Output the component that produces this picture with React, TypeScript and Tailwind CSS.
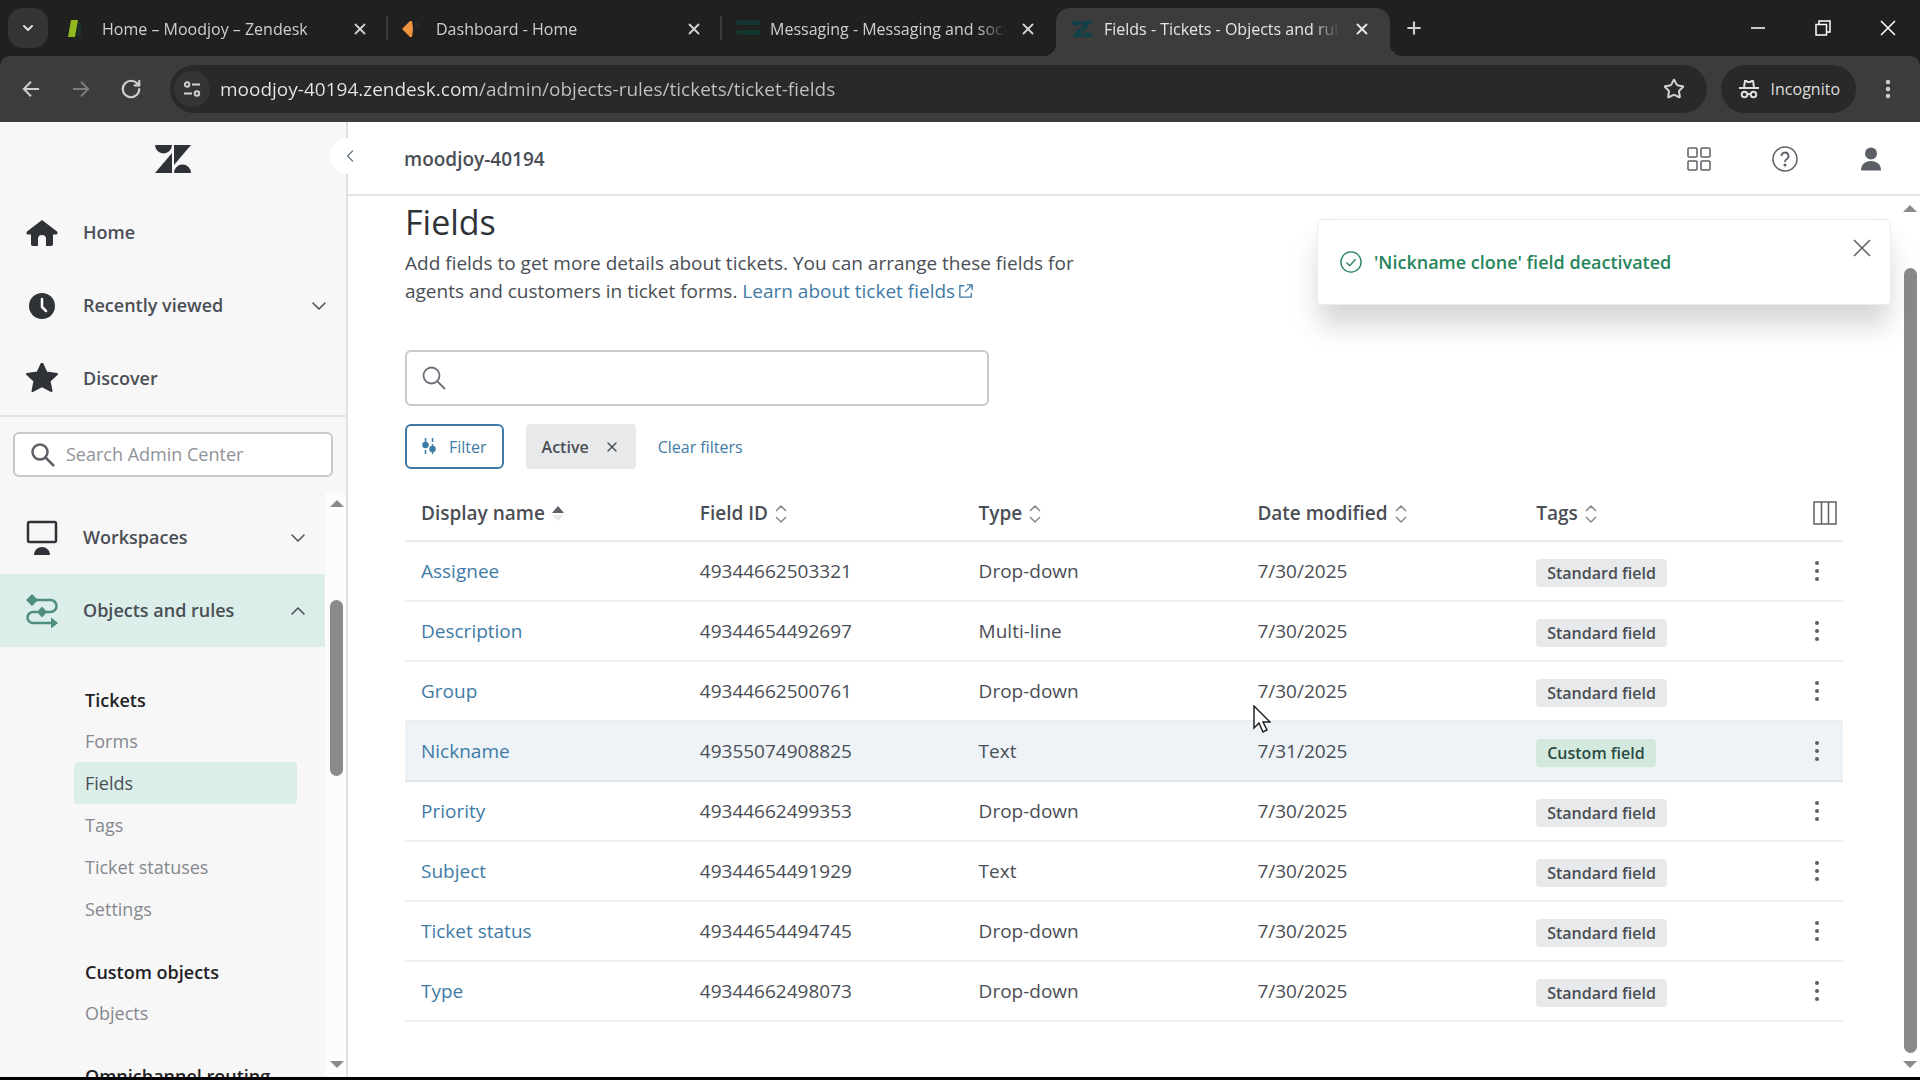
import { useState } from "react";
import type { ReactNode } from "react";
import { ChevronDown, ChevronLeft, ChevronUp, MoreVertical, Plus, RotateCw, Star, X } from "lucide-react";

const TABS = [
  { title: "Home – Moodjoy – Zendesk",               icon: "leaf" },
  { title: "Dashboard - Home",                       icon: "diamond" },
  { title: "Messaging - Messaging and social",       icon: "bars" },
  { title: "Fields - Tickets - Objects and rules",   icon: "zendesk" },
] as const;

const TICKET_LINKS = ["Forms", "Fields", "Tags", "Ticket statuses", "Settings"];

const COLUMNS = ["Display name", "Field ID", "Type", "Date modified", "Tags"];

const FIELDS = [
  { name: "Assignee",      id: "49344662503321", type: "Drop-down",  date: "7/30/2025", custom: false },
  { name: "Description",   id: "49344654492697", type: "Multi-line", date: "7/30/2025", custom: false },
  { name: "Group",         id: "49344662500761", type: "Drop-down",  date: "7/30/2025", custom: false },
  { name: "Nickname",      id: "49355074908825", type: "Text",       date: "7/31/2025", custom: true },
  { name: "Priority",      id: "49344662499353", type: "Drop-down",  date: "7/30/2025", custom: false },
  { name: "Subject",       id: "49344654491929", type: "Text",       date: "7/30/2025", custom: false },
  { name: "Ticket status", id: "49344654494745", type: "Drop-down",  date: "7/30/2025", custom: false },
  { name: "Type",          id: "49344662498073", type: "Drop-down",  date: "7/30/2025", custom: false },
];

function ZendeskMark({ className }: { className: string }) {
  return (
    <svg viewBox="0 0 36 28" className={className} fill="currentColor" aria-hidden="true">
      <path d="M0 0h17a8.500 8.500 0 0 1-17 0z" />
      <path d="M17 8v20H0z" />
      <path d="M19 0h17L19 20z" />
      <path d="M19 28a8.500 8.500 0 0 1 17 0z" />
    </svg>
  );
}

function Favicon({ kind }: { kind: string }) {
  if (kind === "leaf") {
    return <svg viewBox="0 0 24 24" className="size-6 shrink-0 overflow-visible"><path d="M10 5h4l-1 14H9z" fill="#1b2f2b" /><path d="M3 3h7l-3 17H0z" fill="#8fb91d" /></svg>;
  }
  if (kind === "diamond") {
    return <svg viewBox="0 0 24 24" className="size-6 shrink-0 overflow-visible"><path d="M13 4l5 3-4 3z" fill="#1b2f2b" /><path d="M0 12l8-8h2l1 8-1 8H8z" fill="#f0953f" /></svg>;
  }
  if (kind === "bars") {
    return <svg viewBox="0 0 24 24" className="size-6 shrink-0"><path d="M0 3h24v5H0zM1 13h23v5H1z" fill="#14352f" /></svg>;
  }
  return <ZendeskMark className="mx-px h-4 w-[22px] shrink-0 text-[#0e4248]" />;
}

function BrowserTabs() {
  return (
    <div className="flex h-14 items-start bg-[#202020] pt-2">
      <button aria-label="Search tabs" className="ml-2 grid h-10 w-10 shrink-0 place-items-center rounded-[14px] bg-[#343434] text-[#dedede]">
        <ChevronDown className="size-4" strokeWidth={3} />
      </button>
      <div className="ml-1.5 flex h-12">
        {TABS.map((tab, i) => {
          const isActive = i === TABS.length - 1;
          return (
            <div
              key={tab.title}
              className={["relative flex h-12 w-[334px] items-center pb-1.5 pl-3.5 pr-3", isActive ? "rounded-t-[14px] bg-[#3c3c3c] text-[#e6e6e6]" : "text-[#cfcfcf]"].join(" ")}
            >
              {isActive && (
                <>
                  <span className="absolute bottom-0 -left-3 size-3 bg-[radial-gradient(circle_at_0_0,#202020_12px,#3c3c3c_12px)]" />
                  <span className="absolute bottom-0 -right-3 size-3 bg-[radial-gradient(circle_at_100%_0,#202020_12px,#3c3c3c_12px)]" />
                </>
              )}
              <Favicon kind={tab.icon} />
              <a href="#" className="ml-2.5 mr-1.5 flex-1 overflow-hidden whitespace-nowrap text-[16px] [mask-image:linear-gradient(90deg,#000_88%,transparent)]">{tab.title}</a>
              <button aria-label="Close tab" className="grid size-8 shrink-0 place-items-center">
                <X className="size-[18px]" strokeWidth={2.5} />
              </button>
              {i < 2 && <span className="absolute right-0 top-2 h-6 w-0.5 bg-[#3c3c3c]" />}
            </div>
          );
        })}
      </div>
      <button aria-label="New tab" className="ml-1 grid size-10 place-items-center text-[#d0d0d0]">
        <Plus className="size-5" strokeWidth={2.5} />
      </button>
      <div className="ml-auto flex h-10 text-white">
        <button aria-label="Minimize" className="grid w-[65px] place-items-center"><svg viewBox="0 0 16 16" className="size-4"><path d="M1 8h14" stroke="currentColor" strokeWidth="1.500" /></svg></button>
        <button aria-label="Restore" className="grid w-[65px] place-items-center"><svg viewBox="0 0 16 16" className="size-4" fill="none" stroke="currentColor" strokeWidth="1.500"><path d="M1 4.500h10.500V15H1zM4 4.500V1h11v11h-3.500" /></svg></button>
        <button aria-label="Close" className="grid w-[65px] place-items-center"><svg viewBox="0 0 16 16" className="size-4"><path d="M1 1l14 14M15 1L1 15" stroke="currentColor" strokeWidth="1.500" /></svg></button>
      </div>
    </div>
  );
}

function BrowserToolbar() {
  return (
    <div className="bg-[#202020]">
      <div className="flex h-[66px] items-center rounded-t-[10px] bg-[#3c3c3c] text-[#d0d0d0]">
        <button aria-label="Back" className="ml-1.5 grid w-[50px] place-items-center"><svg viewBox="0 0 20 20" className="size-[18px]" fill="none" stroke="currentColor" strokeWidth="2.200"><path d="M19 10H2.500M10 2L2 10l8 8" /></svg></button>
        <button aria-label="Forward" className="grid w-[50px] place-items-center text-[#7c7c7c]"><svg viewBox="0 0 20 20" className="size-[18px]" fill="none" stroke="currentColor" strokeWidth="2.200"><path d="M1 10h16.500M10 2l8 8-8 8" /></svg></button>
        <button aria-label="Reload" className="grid w-[50px] place-items-center"><RotateCw className="size-[22px]" strokeWidth={2.4} /></button>
        <div className="ml-3.5 flex h-12 flex-1 items-center rounded-full bg-[#292929] pl-1">
          <button aria-label="View site information" className="grid size-9 shrink-0 place-items-center rounded-full bg-[#343434]">
            <svg viewBox="0 0 20 20" className="size-[18px]" fill="none" stroke="currentColor" strokeWidth="2.200"><circle cx="4.500" cy="5" r="2.500" /><path d="M10 5h9M1 15h9" /><circle cx="15.500" cy="15" r="2.500" /></svg>
          </button>
          <input
            aria-label="Address"
            defaultValue="moodjoy-40194.zendesk.com/admin/objects-rules/tickets/ticket-fields"
            className="ml-2.5 h-10 flex-1 bg-[linear-gradient(90deg,#e8e8e8_257px,#c2c2c2_257px)] bg-clip-text text-[19px] text-transparent outline-none"
          />
          <button aria-label="Bookmark this tab" className="mr-[22px]"><Star className="size-[22px]" strokeWidth={2.2} /></button>
        </div>
        <div className="ml-3.5 flex h-12 items-center gap-3 rounded-full bg-[#292929] pl-[18px] pr-4 text-[16px] text-[#dedede]">
          <svg viewBox="0 0 20 20" className="size-5" fill="none" stroke="currentColor" strokeWidth="2"><path d="M5 8l1-6h1.500l1 1h3l1-1H14l1 6M0 9h20" /><circle cx="5.500" cy="15.500" r="2.800" /><circle cx="14.500" cy="15.500" r="2.800" /><path d="M8.500 15h3" /></svg>
          Incognito
        </div>
        <button aria-label="Browser menu" className="mx-5"><MoreVertical className="size-6" strokeWidth={2.5} /></button>
      </div>
    </div>
  );
}

function ScrollRail({ children, className }: { children: ReactNode; className: string }) {
  return (
    <div className={["flex shrink-0 flex-col items-center", className].join(" ")} aria-hidden="true">
      <span className="border-x-[7px] border-b-[7px] border-x-transparent border-b-[#8a8a8a]" />
      {children}
      <span className="mt-auto border-x-[7px] border-t-[7px] border-x-transparent border-t-[#8a8a8a]" />
    </div>
  );
}

function NavButton({ icon, label, children, className = "" }: { icon: ReactNode; label: string; children?: ReactNode; className?: string }) {
  return (
    <button className={["flex h-[73px] w-full shrink-0 items-center pl-[26px] text-left text-[18px] font-semibold text-[#4a4e55]", className].join(" ")}>
      <span className="mr-[25px] grid size-8 place-items-center text-[#2f3237]">{icon}</span>
      <span className="flex-1">{label}</span>
      {children}
    </button>
  );
}

function Sidebar() {
  return (
    <aside className="relative flex w-[348px] shrink-0 flex-col border-r-2 border-[#dfe0e2] bg-[#f7f7f8]">
      <div className="flex h-[74px] items-center justify-center"><ZendeskMark className="h-7 w-9 text-[#2f3237]" /></div>
      <button aria-label="Collapse sidebar" className="absolute -right-5 top-4 grid size-9 place-items-center rounded-full bg-white pl-1 text-[#68737d]">
        <ChevronLeft className="size-5" strokeWidth={1.5} />
      </button>
      <nav className="border-b-2 border-[#e3e4e6]">
        <NavButton label="Home" icon={<svg viewBox="0 0 32 28" className="w-8" fill="currentColor"><path d="M16 1L1 12.500c-1 1-.5 3 1 3h3V25c0 1 .5 2 2 2h5v-7a4 4 0 0 1 8 0v7h5c1.500 0 2-1 2-2v-9.500h3c1.500 0 2-2 1-3z" /></svg>} />
        <NavButton label="Recently viewed" icon={<svg viewBox="0 0 26 26" className="w-[26px]"><circle cx="13" cy="13" r="13" fill="currentColor" /><path d="M13 6v8l4 4" fill="none" stroke="#fff" strokeWidth="2.500" strokeLinecap="round" /></svg>}>
          <ChevronDown className="mr-[15px] size-6" strokeWidth={1.5} />
        </NavButton>
        <NavButton label="Discover" icon={<svg viewBox="0 0 32 32" className="w-8" fill="currentColor" stroke="currentColor" strokeWidth="2" strokeLinejoin="round"><path d="M16 0l4.400 9.500L31 11l-7.500 7L25.500 28 16 23l-9.500 5 2-10L1 11l10.600-1.500z" /></svg>} />
      </nav>
      <div className="px-[13px] pb-4 pt-[15px]">
        <label className="flex h-[45px] items-center gap-[11px] rounded-md border-2 border-[#c8c9cc] bg-white pl-4">
          <svg viewBox="0 0 24 24" className="size-6 shrink-0" fill="none" stroke="#5c6066" strokeWidth="2.500"><circle cx="9" cy="9" r="7.500" /><path d="M14.500 14.500L23 23" /></svg>
          <input aria-label="Search Admin Center" placeholder="Search Admin Center" className="w-full min-w-0 text-[18px] outline-none placeholder:text-[#8f9399]" />
        </label>
      </div>
      <div className="flex min-h-0 flex-1">
        <nav className="flex min-w-0 flex-1 flex-col overflow-hidden pt-2">
          <NavButton label="Workspaces" icon={<svg viewBox="0 0 32 36" className="w-8"><rect x="2" y="2" width="28" height="20" rx="1.500" fill="none" stroke="currentColor" strokeWidth="2.500" /><path d="M8 35a8 8 0 0 1 16 0z" fill="currentColor" /></svg>}>
            <ChevronDown className="mr-[15px] size-6" strokeWidth={1.5} />
          </NavButton>
          <NavButton
            label="Objects and rules"
            className="bg-[#dbeeea]"
            icon={<svg viewBox="0 0 32 34" className="w-8" fill="#4f8d81"><path d="M6 6h18.500a5.500 5.500 0 0 1 0 12H7a5.500 5.500 0 0 0 0 11h18" fill="none" stroke="#4f8d81" strokeWidth="2.500" /><path d="M6 0l6 6-6 6-6-6zM16 12.500l5 5.500-5 5.500-5-5.500zM25 23.500l7 5.500-7 5.500z" /></svg>}
          >
            <ChevronUp className="mr-[15px] size-6" strokeWidth={1.5} />
          </NavButton>
          <div className="pl-[74px] pr-7 pt-[33px] text-[18px] text-[#85888e]">
            <h2 className="flex h-10 items-center px-[11px] font-semibold text-[#1f2124]">Tickets</h2>
            {TICKET_LINKS.map(link => (
              <a key={link} href="#" className={["flex h-[42px] items-center rounded px-[11px]", link === "Fields" ? "bg-[#dbeeea] text-[#4a4e55]" : ""].join(" ")}>{link}</a>
            ))}
            <h2 className="mt-[22px] flex h-10 items-center whitespace-nowrap px-[11px] font-semibold text-[#1f2124]">Custom objects</h2>
            <a href="#" className="flex h-[42px] items-center px-[11px]">Objects</a>
            <h2 className="mt-[22px] flex h-10 items-center whitespace-nowrap px-[11px] font-semibold text-[#1f2124]">Omnichannel routing</h2>
          </div>
        </nav>
        <ScrollRail className="w-[21px] bg-[#fcfcfc] pb-[9px] pl-0.5 pt-[7px]">
          <span className="mt-[93px] h-44 w-[13px] rounded-full bg-[#8a8a8a]" />
        </ScrollRail>
      </div>
    </aside>
  );
}

function TopBar() {
  return (
    <header className="flex h-[74px] shrink-0 items-center border-b-2 border-[#e3e4e6] pl-14 pr-9 pt-0.5 text-[#5c6066]">
      <span className="flex-1 text-[19px] font-semibold text-[#4a4e55]">moodjoy-40194</span>
      <div className="flex items-center gap-[60px]">
        <button aria-label="Products"><svg viewBox="0 0 26 26" className="size-[26px]" fill="none" stroke="currentColor" strokeWidth="1.500"><rect x="2" y="2" width="9" height="9" rx="1" /><rect x="15" y="2" width="9" height="9" rx="1" /><rect x="2" y="15" width="9" height="9" rx="1" /><rect x="15" y="15" width="9" height="9" rx="1" /></svg></button>
        <button aria-label="Help"><svg viewBox="0 0 26 26" className="size-[26px]" fill="none" stroke="currentColor" strokeWidth="1.500"><circle cx="13" cy="13" r="12" /><path d="M9.500 10a3.500 3.500 0 1 1 5 3.200c-1 .5-1.500 1.200-1.500 2.800" strokeWidth="1.800" /><circle cx="13" cy="19" r=".8" fill="currentColor" /></svg></button>
        <button aria-label="Account"><svg viewBox="0 0 26 26" className="size-[26px]" fill="currentColor"><circle cx="13" cy="7.500" r="6" /><path d="M3 24.500c0-6 4-9.500 10-9.500s10 3.500 10 9.500z" /></svg></button>
      </div>
    </header>
  );
}

function SortMark({ active }: { active: boolean }) {
  if (active) {
    return <svg viewBox="0 0 14 20" className="h-5 w-3.5"><path d="M1 9l6-7 6 7z" fill="#5c6066" /><path d="M1 11h12l-6 6z" fill="#e9eaec" /></svg>;
  }
  return <svg viewBox="0 0 14 20" className="h-5 w-3.5" fill="none" stroke="#85888e" strokeWidth="1.500"><path d="M2 7l5-5 5 5M2 13l5 5 5-5" /></svg>;
}

function FieldsTable() {
  return (
    <table className="mt-4 w-full table-fixed text-left text-[19px] text-[#4a4e55]">
      <thead>
        <tr className="h-14 border-b-2 border-[#e9eaec]">
          {COLUMNS.map((col, i) => (
            <th key={col} className="pl-4 pt-0.5 font-semibold">
              <button className="flex items-center gap-1.5 whitespace-nowrap">{col}<SortMark active={i === 0} /></button>
            </th>
          ))}
          <th className="w-11 pl-3.5">
            <button aria-label="Choose columns" className="block"><svg viewBox="0 0 24 24" className="size-6" fill="none" stroke="#5c6066" strokeWidth="1.500"><path d="M1 1h22v22H1zM8.500 1v22M15.500 1v22" /></svg></button>
          </th>
        </tr>
      </thead>
      <tbody>
        {FIELDS.map(f => (
          <tr key={f.id} className={["h-[60px] border-b-2", f.custom ? "border-[#dce5ea] bg-[#edf3f7]" : "border-[#eeeff1]"].join(" ")}>
            <td className="pl-4"><a href="#" className="text-[#3f7ba6]">{f.name}</a></td>
            <td className="pl-4">{f.id}</td>
            <td className="pl-4">{f.type}</td>
            <td className="pl-4">{f.date}</td>
            <td className="pl-4 pt-1">
              <span className={["block h-7 w-fit rounded-sm px-[11px] text-[16px] leading-7 font-semibold", f.custom ? "bg-[#d3e9dd] text-[#2b4a41]" : "bg-[#e8e9eb] text-[#4a4e55]"].join(" ")}>
                {f.custom ? "Custom field" : "Standard field"}
              </span>
            </td>
            <td className="pl-3.5">
              <button aria-label={`Actions for ${f.name}`} className="block"><svg viewBox="0 0 8 24" className="h-6 w-2" fill="#5c6066"><circle cx="4" cy="4" r="2" /><circle cx="4" cy="12" r="2" /><circle cx="4" cy="20" r="2" /></svg></button>
            </td>
          </tr>
        ))}
      </tbody>
    </table>
  );
}

function Toast({ onClose }: { onClose: () => void }) {
  return (
    <div role="status" className="absolute right-[29px] top-[23px] flex h-[86px] w-[574px] items-center rounded border border-[#ececee] bg-white pl-[22px] text-[18px] font-semibold text-[#26855c] shadow-[0_22px_28px_-2px_rgba(0,0,0,0.17)]">
      <svg viewBox="0 0 24 24" className="mr-3 size-[22px]" fill="none" stroke="currentColor" strokeWidth="1.500"><circle cx="12" cy="12" r="11" /><path d="M7 12.500l3.500 3.500L17 9" /></svg>
      'Nickname clone' field deactivated
      <button aria-label="Dismiss" onClick={onClose} className="absolute right-[18px] top-[18px] text-[#5c6066]"><svg viewBox="0 0 20 20" className="size-5" stroke="currentColor" strokeWidth="1.500"><path d="M2 2l16 16M18 2L2 18" /></svg></button>
    </div>
  );
}

export default function App() {
  const [toastOpen, setToastOpen] = useState(true);

  return (
    <div className="flex h-screen flex-col overflow-hidden border-b-[3px] border-black bg-white font-['Open_Sans','Noto_Sans',sans-serif]">
      <BrowserTabs />
      <BrowserToolbar />
      <div className="flex min-h-0 flex-1">
        <Sidebar />
        <div className="flex min-w-0 flex-1 flex-col">
          <TopBar />
          <div className="relative flex min-h-0 flex-1">
            <main className="min-w-0 flex-1 overflow-hidden pl-[57px] pr-[58px]">
              <h1 className="pt-[3px] text-[34px] leading-[46px] text-[#2f3237]">Fields</h1>
              <p className="mt-1 max-w-[700px] text-[19px] leading-7 text-[#4a4e55]">
                Add fields to get more details about tickets. You can arrange these fields for agents and customers in ticket forms.{" "}
                <a href="#" className="whitespace-nowrap text-[#3f7ba6]">
                  Learn about ticket fields
                  <svg viewBox="0 0 16 16" className="ml-1 inline size-3.5 align-baseline" fill="none" stroke="currentColor" strokeWidth="1.500"><path d="M6 2H1v13h13v-5M9 1h6v6M15 1L7 9" /></svg>
                </a>
              </p>
              <label className="mt-[45px] flex h-14 w-[584px] items-center rounded-md border-2 border-[#c8c9cc] pl-[15px]">
                <svg viewBox="0 0 24 24" className="size-6 shrink-0" fill="none" stroke="#6b6f76" strokeWidth="1.800"><circle cx="9.500" cy="9.500" r="8" /><path d="M15 15l8 8" /></svg>
                <input aria-label="Search fields" className="w-full px-3 text-[18px] outline-none" />
              </label>
              <div className="mt-[18px] flex h-[45px] items-stretch text-[16px]">
                <button className="flex items-center gap-[13px] rounded-md border-2 border-[#3f7ba6] px-[15px] text-[#3f7ba6]">
                  <svg viewBox="0 0 14 20" className="h-5 w-3.5" stroke="currentColor" strokeWidth="1.500"><path d="M3.500 1v18M10.500 1v18" strokeDasharray="4 2" /><circle cx="3.500" cy="8" r="2.500" fill="currentColor" /><circle cx="10.500" cy="12" r="2.500" fill="currentColor" /></svg>
                  Filter
                </button>
                <span className="ml-[22px] flex items-center gap-[15px] rounded bg-[#e8e9eb] px-4 font-semibold text-[#4a4e55]">
                  Active
                  <button aria-label="Remove Active filter"><X className="size-4" strokeWidth={2} /></button>
                </span>
                <button className="ml-[22px] text-[#3f7ba6]">Clear filters</button>
              </div>
              <FieldsTable />
            </main>
            <ScrollRail className="w-[19px] pb-[9px] pr-px pt-[9px]">
              <span className="mb-2 mt-14 w-[13px] flex-1 rounded-full bg-[#8a8a8a]" />
            </ScrollRail>
            {toastOpen && <Toast onClose={() => setToastOpen(false)} />}
          </div>
        </div>
      </div>
      <svg viewBox="0 0 18 28" className="pointer-events-none absolute left-[1253px] top-[705px] h-7 w-[18px]" fill="#fff" stroke="#222" strokeWidth="1.500"><path d="M1 1v22l5-5 4 9 4-2-4-8h7z" /></svg>
    </div>
  );
}
